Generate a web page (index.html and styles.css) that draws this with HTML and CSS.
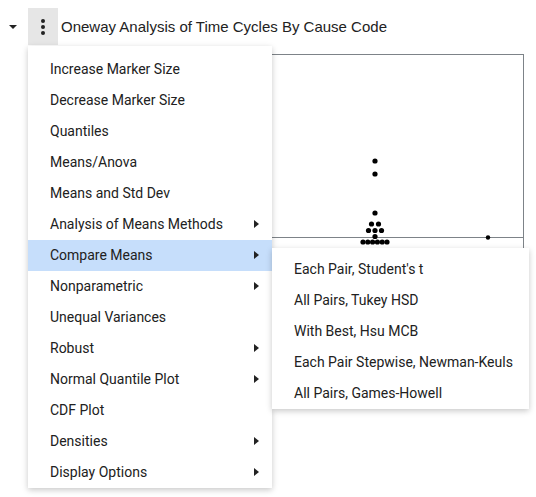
FILE: index.html
```html
<!DOCTYPE html>
<html lang="en">
<head>
    <meta charset="UTF-8">
    <meta name="viewport" content="width=device-width, initial-scale=1.0">
    <title>Oneway Analysis</title>
    <link rel="stylesheet" href="styles.css">
</head>
<body>
    <div class="report">
        <div class="outline-header">
            <span class="disclosure"></span>
            <button class="menu-button" type="button">
                <span class="dot"></span>
                <span class="dot"></span>
                <span class="dot"></span>
            </button>
            <span class="outline-title">Oneway Analysis of Time Cycles By Cause Code</span>
        </div>

        <div class="plot-frame">
            <svg class="plot" width="272" height="334" viewBox="0 0 272 334">
                <line x1="0" y1="182.5" x2="272" y2="182.5" stroke="#7d8388" stroke-width="1"/>
                <g fill="#000">
                    <circle cx="124" cy="106" r="2.6"/>
                    <circle cx="124" cy="119" r="2.6"/>
                    <circle cx="124" cy="158" r="2.6"/>
                    <circle cx="120.5" cy="169" r="2.6"/>
                    <circle cx="127.5" cy="169" r="2.6"/>
                    <circle cx="117.5" cy="175.5" r="2.6"/>
                    <circle cx="124" cy="175.5" r="2.6"/>
                    <circle cx="130.5" cy="175.5" r="2.6"/>
                    <circle cx="124" cy="181.5" r="2.6"/>
                    <circle cx="112" cy="187" r="2.6"/>
                    <circle cx="116.8" cy="187" r="2.6"/>
                    <circle cx="121.6" cy="187" r="2.6"/>
                    <circle cx="126.4" cy="187" r="2.6"/>
                    <circle cx="131.2" cy="187" r="2.6"/>
                    <circle cx="136" cy="187" r="2.6"/>
                    <circle cx="237" cy="182.5" r="2.2"/>
                </g>
            </svg>
        </div>
    </div>

    <ul class="menu">
        <li class="menu-item">Increase Marker Size</li>
        <li class="menu-item">Decrease Marker Size</li>
        <li class="menu-item">Quantiles</li>
        <li class="menu-item">Means/Anova</li>
        <li class="menu-item">Means and Std Dev</li>
        <li class="menu-item has-sub">Analysis of Means Methods</li>
        <li class="menu-item has-sub active">Compare Means</li>
        <li class="menu-item has-sub">Nonparametric</li>
        <li class="menu-item">Unequal Variances</li>
        <li class="menu-item has-sub">Robust</li>
        <li class="menu-item has-sub">Normal Quantile Plot</li>
        <li class="menu-item">CDF Plot</li>
        <li class="menu-item has-sub">Densities</li>
        <li class="menu-item has-sub">Display Options</li>
    </ul>

    <ul class="menu submenu">
        <li class="menu-item">Each Pair, Student's t</li>
        <li class="menu-item">All Pairs, Tukey HSD</li>
        <li class="menu-item">With Best, Hsu MCB</li>
        <li class="menu-item">Each Pair Stepwise, Newman-Keuls</li>
        <li class="menu-item">All Pairs, Games-Howell</li>
    </ul>
</body>
</html>
```

FILE: styles.css
```css
body {
    margin: 0;
    font-family: Roboto, "Liberation Sans", Arial, sans-serif;
    background-color: #fff;
    color: #212121;
}
.report {
    padding: 8px 0 0 8px;
}
.outline-header {
    display: flex;
    align-items: center;
    height: 37px;
}
.disclosure {
    width: 0;
    height: 0;
    border-left: 4px solid transparent;
    border-right: 4px solid transparent;
    border-top: 4px solid #222;
    margin: 1px 11px 0 1px;
}
.menu-button {
    display: flex;
    flex-direction: column;
    align-items: center;
    justify-content: center;
    gap: 2px;
    width: 30px;
    height: 37px;
    padding: 0;
    border: none;
    background-color: #e6e6e6;
    cursor: pointer;
}
.dot {
    width: 4px;
    height: 4px;
    border-radius: 50%;
    background-color: #222;
}
.outline-title {
    margin-left: 3px;
    font-family: "Liberation Sans", Arial, sans-serif;
    font-size: 15px;
    color: #222;
}
.plot-frame {
    width: 272px;
    height: 334px;
    margin: 9px 0 0 242px;
    border: 1px solid #7d8388;
}
.plot {
    display: block;
}
.menu {
    position: absolute;
    left: 28px;
    top: 46px;
    width: 244px;
    margin: 0;
    padding: 8px 0 0;
    list-style: none;
    background-color: #fff;
    box-shadow: 0 2px 6px rgba(0, 0, 0, 0.22);
    font-size: 14px;
}
.menu-item {
    position: relative;
    height: 31px;
    line-height: 30px;
    padding-left: 22px;
    white-space: nowrap;
}
.menu-item.active {
    background-color: #c6defb;
}
.has-sub::after {
    content: "";
    position: absolute;
    right: 13px;
    top: 11px;
    border-top: 4.5px solid transparent;
    border-bottom: 4.5px solid transparent;
    border-left: 5px solid #222;
}
.submenu {
    left: 272px;
    top: 248px;
    width: 257px;
    padding-top: 6px;
}
```
